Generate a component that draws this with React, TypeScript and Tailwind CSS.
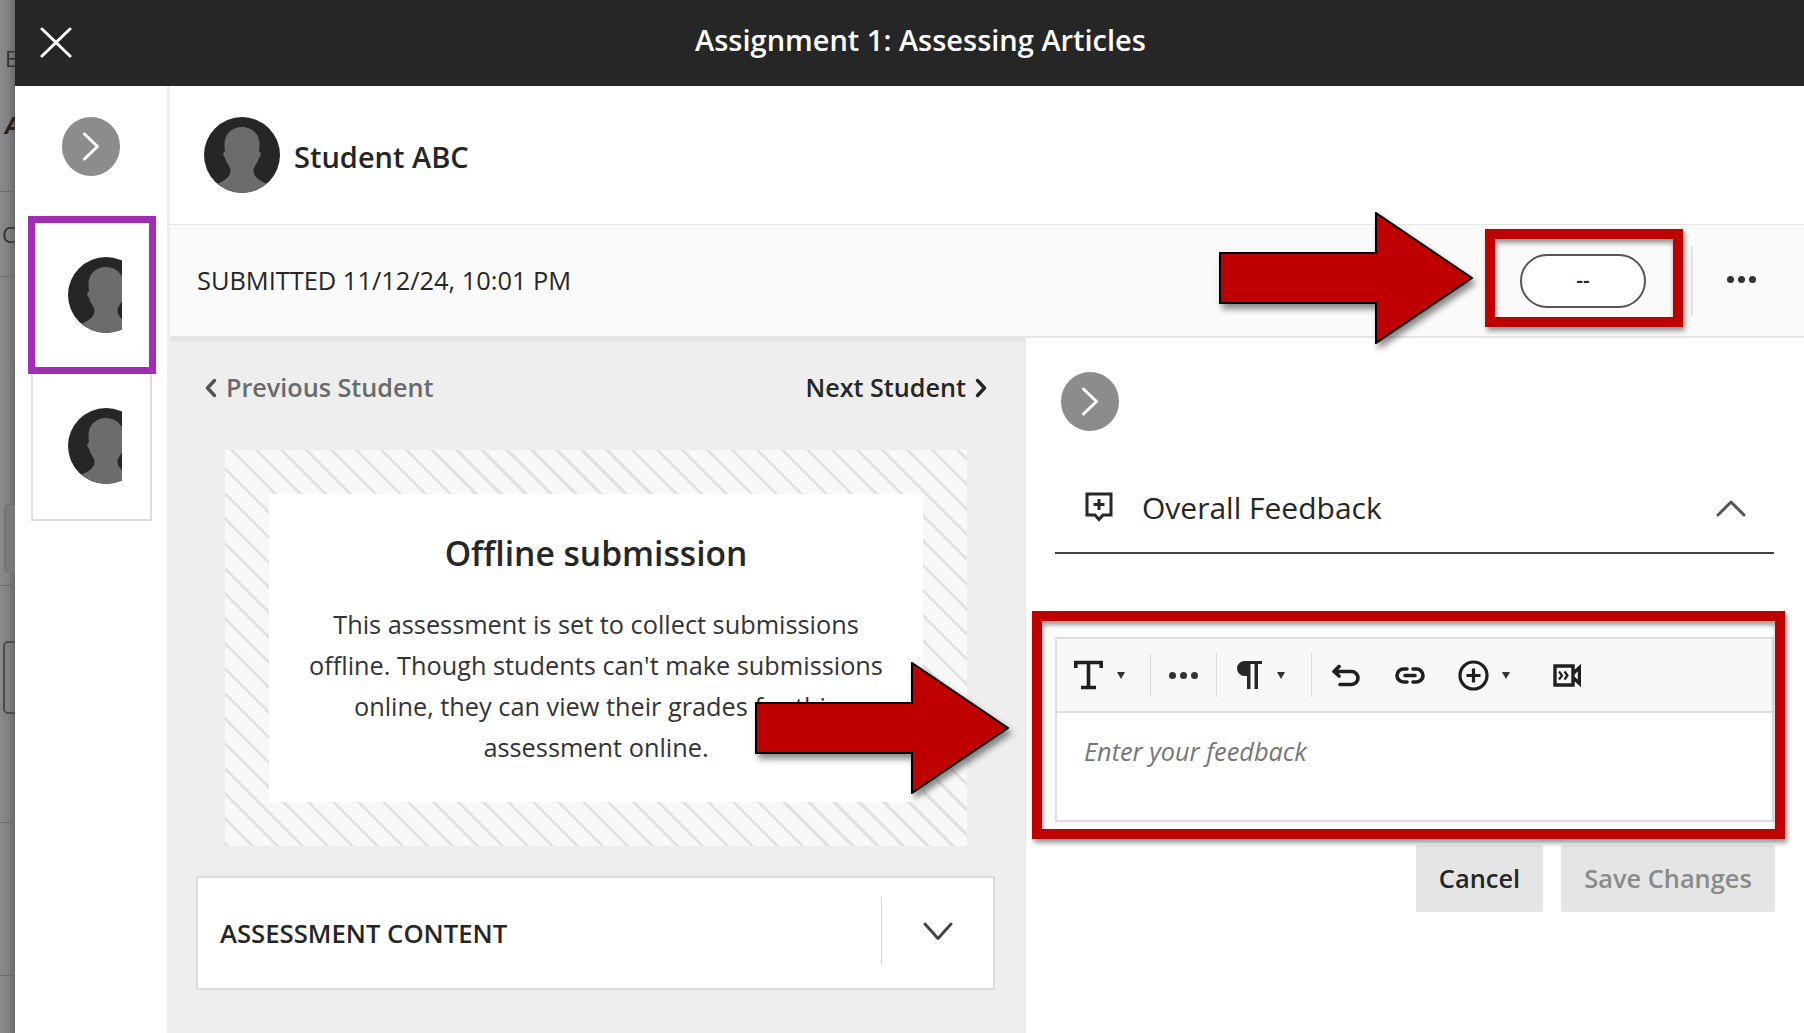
const Avatar = ({ clipped }: { clipped?: boolean }) => (
  <div className={clipped ? "w-[54px] h-[76px] overflow-hidden shrink-0" : "w-[76px] h-[76px] overflow-hidden shrink-0"}>
    <div className="w-[76px] h-[76px] rounded-full overflow-hidden bg-[#262626]">
      <svg viewBox="0 0 76 76" className="w-[76px] h-[76px] block">
        <path
          fill="#6c6c6c"
          d="M38 10 C28 10 20.5 17 20.5 27 C20.5 30 20.7 32 21 34.5 C19 35 18.8 38 20 39.5 C21.5 41 21.5 43 22.5 45 C24 48 26.5 50 26.5 54 C26.5 59 22 63 13 67 L8 76 L68 76 L63 67 C54 63 49.5 59 49.5 54 C49.5 50 52 48 53.5 45 C54.5 43 54.5 41 56 39.5 C57.2 38 57 35 55 34.5 C55.3 32 55.5 30 55.5 27 C55.5 17 48 10 38 10 Z"
        />
      </svg>
    </div>
  </div>
);

const RoundChevron = () => (
  <div className="w-[58px] h-[59px] rounded-full bg-[#8c8c8c] flex items-center justify-center shrink-0">
    <svg width="18" height="29" viewBox="0 0 18 29" fill="none" stroke="#fff" strokeWidth="3" strokeLinecap="round" strokeLinejoin="round">
      <path d="M2.5 2 L15.5 14.5 L2.5 27" />
    </svg>
  </div>
);

const Caret = ({ className }: { className: string }) => (
  <svg width="8" height="7" viewBox="0 0 8 7" className={className}>
    <path d="M0 0 H8 L4 7 Z" fill="#333" />
  </svg>
);

const ToolSep = ({ className }: { className: string }) => <div className={`w-px h-[44px] bg-[#dcdcdc] shrink-0 ${className}`} />;

const Arrow = ({ className }: { className: string }) => (
  <svg
    width="254"
    height="132"
    viewBox="-1 -1 254 132"
    className={`absolute drop-shadow-[3px_5px_3px_rgba(0,0,0,0.45)] ${className}`}
  >
    <path d="M0 40 H156 V0 L252 65 L156 130 V90 H0 Z" fill="#bf0000" stroke="#000" strokeWidth="2" />
  </svg>
);

const App = () => {
  return (
    <div className="relative w-[1804px] h-[1033px] overflow-hidden flex bg-white font-['Open_Sans',sans-serif] text-[#262626]">
      {/* page behind the panel */}
      <div className="w-[15px] h-full shrink-0 overflow-hidden flex flex-col bg-linear-to-r from-[#8a8a8a] via-[#828282] to-[#6a6a6a] text-[#333]">
        <div className="h-[192px] shrink-0 border-b border-[#6c6c6c] pt-[46px] pl-[5px]">
          <div className="text-[22px] leading-[24px]">E</div>
          <div className="text-[24px] leading-[24px] mt-[43px] font-bold italic text-[#222]">A</div>
        </div>
        <div className="h-[85px] shrink-0 border-b border-[#6c6c6c] flex items-center pl-[2px] text-[22px]">C</div>
        <div className="h-[309px] shrink-0 border-b border-[#6c6c6c] pt-[227px] pl-[4px]">
          <div className="w-[24px] h-[69px] rounded-[5px] bg-[#797979] border border-[#707070]" />
        </div>
        <div className="h-[237px] shrink-0 border-b border-[#6c6c6c] pt-[55px] pl-[3px]">
          <div className="w-[24px] h-[73px] rounded-[5px] border-2 border-[#4c4c4c]" />
        </div>
        <div className="h-[153px] shrink-0 border-b border-[#6c6c6c]" />
      </div>

      <div className="flex-1 h-full flex flex-col min-w-0">
        <header className="h-[86px] shrink-0 bg-[#262626] relative flex items-center justify-center pb-[6px]">
          <svg width="32" height="31" viewBox="0 0 32 31" className="absolute left-[25px] top-[27px]" fill="none" stroke="#fff" strokeWidth="3" strokeLinecap="round">
            <path d="M2 2 L30 29 M30 2 L2 29" />
          </svg>
          <h1 className="text-white text-[29px] font-semibold ml-[22px]">Assignment 1: Assessing Articles</h1>
        </header>

        <div className="flex-1 flex min-h-0">
          {/* student list */}
          <aside className="w-[155px] shrink-0 border-r-[3px] border-[#eeeeee] flex flex-col items-center pt-[31px]">
            <RoundChevron />
            <div className="mt-[40px] ml-[2px] w-[128px] h-[158px] border-[7px] border-[#a12db5] flex items-center justify-center pl-[6px]">
              <Avatar clipped />
            </div>
            <div className="ml-[1px] w-[121px] h-[147px] border-2 border-t-0 border-[#dddddd] flex items-center justify-center pl-[6px] pb-[2px]">
              <Avatar clipped />
            </div>
          </aside>

          <div className="flex-1 flex flex-col min-w-0">
            <div className="h-[138px] shrink-0 flex items-center pl-[34px]">
              <Avatar />
              <span className="ml-[14px] text-[29px] font-semibold mt-[4px]">Student ABC</span>
            </div>

            <div className="h-[114px] shrink-0 bg-[#fafafa] border-t border-[#e8e8e8] border-b-2 border-b-[#e6e6e6] flex items-center pl-[27px]">
              <span className="text-[25.4px]">SUBMITTED 11/12/24, 10:01 PM</span>
              <div className="ml-auto w-[126px] h-[54px] rounded-full border-2 border-[#555] bg-white flex items-center justify-center text-[21px] font-semibold">
                --
              </div>
              <div className="w-[2px] h-[70px] bg-[#e2e2e2] ml-[45px]" />
              <div className="ml-[34px] mr-[48px] flex gap-[4px] mb-[2px]">
                <div className="w-[7px] h-[7px] rounded-full bg-[#333]" />
                <div className="w-[7px] h-[7px] rounded-full bg-[#333]" />
                <div className="w-[7px] h-[7px] rounded-full bg-[#333]" />
              </div>
            </div>

            <div className="flex-1 flex min-h-0">
              {/* submission */}
              <main className="w-[855px] shrink-0 bg-[#eeeeee] border-t-[3px] border-[#e3e3e3]">
                <div className="h-[94px] flex items-center justify-between pl-[35px] pr-[38px] mb-[15px] text-[25.2px] font-semibold">
                  <span className="flex items-center gap-[9px] text-[#6a6a6a]">
                    <svg width="12" height="20" viewBox="0 0 12 20" fill="none" stroke="#555" strokeWidth="3.5" strokeLinecap="round" strokeLinejoin="round">
                      <path d="M9.5 2.5 L2.5 10 L9.5 17.5" />
                    </svg>
                    Previous Student
                  </span>
                  <span className="flex items-center gap-[9px]">
                    Next Student
                    <svg width="12" height="20" viewBox="0 0 12 20" fill="none" stroke="#262626" strokeWidth="3.5" strokeLinecap="round" strokeLinejoin="round">
                      <path d="M2.5 2.5 L9.5 10 L2.5 17.5" />
                    </svg>
                  </span>
                </div>

                <div className="ml-[55px] w-[742px] h-[396px] p-[44px] bg-[repeating-linear-gradient(45deg,#e2e2e2_0,#e2e2e2_3px,#f8f8f8_3px,#f8f8f8_17.7px)]">
                  <div className="h-full bg-white flex flex-col items-center pt-[37px] text-center">
                    <h2 className="text-[33.6px] leading-[44px] font-semibold">Offline submission</h2>
                    <p className="mt-[29px] w-[600px] text-[25.3px] leading-[41px] text-[#333]">
                      This assessment is set to collect submissions offline. Though students can't make submissions online, they can view their grades for this assessment online.
                    </p>
                  </div>
                </div>

                <div className="mt-[30px] ml-[26px] w-[799px] h-[114px] bg-white border-2 border-[#dcdcdc] flex items-center pl-[22px]">
                  <span className="text-[25.7px] font-semibold mt-[2px]">ASSESSMENT CONTENT</span>
                  <div className="ml-auto w-px h-[68px] bg-[#d5d5d5] mb-[4px]" />
                  <svg width="30" height="19" viewBox="0 0 30 19" fill="none" stroke="#444" strokeWidth="3" strokeLinecap="round" strokeLinejoin="round" className="ml-[41px] mr-[40px] mb-[4px]">
                    <path d="M2 2 L15 16.5 L28 2" />
                  </svg>
                </div>
              </main>

              {/* feedback */}
              <section className="flex-1 min-w-0 bg-white border-l border-[#e5e5e5] pt-[34px]">
                <div className="ml-[35px]">
                  <RoundChevron />
                </div>
                <div className="ml-[29px] mr-[30px] mt-[46px] h-[77px] pb-[15px] border-b-2 border-[#444] flex items-center pl-[30px] pr-[28px]">
                  <svg width="28" height="30" viewBox="0 0 28 30" fill="none" stroke="#262626" strokeWidth="3">
                    <path d="M2 2 H26 V23 H18 L14 27.5 L10 23 H2 Z" />
                    <path d="M14 7 V18 M8.5 12.5 H19.5" />
                  </svg>
                  <span className="ml-[29px] text-[30px]">Overall Feedback</span>
                  <svg width="30" height="17" viewBox="0 0 30 17" fill="none" stroke="#555" strokeWidth="3" strokeLinecap="round" strokeLinejoin="round" className="ml-auto mt-[2px]">
                    <path d="M2 15 L15 2 L28 15" />
                  </svg>
                </div>

                <div className="ml-[29px] mr-[30px] mt-[83px] h-[185px] border-2 border-[#dedede] flex flex-col">
                  <div className="h-[74px] shrink-0 bg-[#f8f8f8] border-b-2 border-[#dedede] flex items-center pl-[17px] text-[#262626]">
                    <svg width="29" height="30" viewBox="0 0 29 30" fill="none" stroke="#1f1f1f" strokeWidth="3.6" className="shrink-0">
                      <path d="M1.8 8 V2.5 H27.2 V8 M14.5 2.5 V27.5 M7 27.5 H22" />
                    </svg>
                    <Caret className="ml-[14px] shrink-0" />
                    <ToolSep className="ml-[25px]" />
                    <div className="ml-[18px] flex gap-[4px] shrink-0">
                      <div className="w-[7px] h-[7px] rounded-full bg-[#333]" />
                      <div className="w-[7px] h-[7px] rounded-full bg-[#333]" />
                      <div className="w-[7px] h-[7px] rounded-full bg-[#333]" />
                    </div>
                    <ToolSep className="ml-[18px]" />
                    <svg width="26" height="30" viewBox="0 0 26 30" className="ml-[19px] shrink-0">
                      <path d="M26 1 H8.5 A7.5 7.5 0 0 0 8.5 16 H11 V29 H14.5 V4 H18.5 V29 H22 V4 H26 Z" fill="#262626" />
                    </svg>
                    <Caret className="ml-[15px] shrink-0" />
                    <ToolSep className="ml-[26px]" />
                    <svg width="30" height="23" viewBox="0 0 30 23" fill="none" stroke="#1f1f1f" strokeWidth="3.6" strokeLinecap="round" strokeLinejoin="round" className="ml-[19px] shrink-0">
                      <path d="M8 2.5 L3 7.5 L8 12 M3 7.5 H20.5 A6.5 6.5 0 0 1 20.5 20.5 H9" />
                    </svg>
                    <svg width="30" height="17" viewBox="0 0 30 17" fill="none" stroke="#1f1f1f" strokeWidth="3.6" strokeLinecap="round" className="ml-[34px] shrink-0">
                      <path d="M12 2 H8.5 A6.5 6.5 0 0 0 8.5 15 H12 M18 2 H21.5 A6.5 6.5 0 0 1 21.5 15 H18 M10 8.5 H20" />
                    </svg>
                    <svg width="31" height="31" viewBox="0 0 31 31" fill="none" stroke="#1f1f1f" strokeWidth="3.2" className="ml-[33px] shrink-0">
                      <circle cx="15.5" cy="15.5" r="13.5" />
                      <path d="M15.5 8.5 V22.5 M8.5 15.5 H22.5" />
                    </svg>
                    <Caret className="ml-[13px] shrink-0" />
                    <svg width="28" height="23" viewBox="0 0 28 23" fill="none" stroke="#1f1f1f" strokeWidth="3.4" className="ml-[43px] shrink-0">
                      <path d="M2 2 H20 V21 H2 Z M20 9.5 L26.5 3.5 V19.5 L20 13.5" />
                      <path d="M6 7.5 L9 11.5 L6 15.5 M11.5 7.5 L14.5 11.5 L11.5 15.5" strokeWidth="2.2" />
                    </svg>
                  </div>
                  <div className="flex-1 bg-white pl-[27px] pt-[21px] text-[25.3px] leading-[34px] italic text-[#767676]">Enter your feedback</div>
                </div>

                <div className="mt-[23px] mr-[29px] flex justify-end gap-[18px] text-[25.4px] font-semibold">
                  <div className="w-[127px] h-[67px] rounded-[2px] bg-[#e5e5e5] flex items-center justify-center">Cancel</div>
                  <div className="w-[214px] h-[67px] rounded-[2px] bg-[#e5e5e5] text-[#8a8a8a] flex items-center justify-center">Save Changes</div>
                </div>
              </section>
            </div>
          </div>
        </div>
      </div>

      {/* callouts drawn over the screen */}
      <Arrow className="left-[1219px] top-[212px]" />
      <Arrow className="left-[755px] top-[662px]" />
      <div className="absolute left-[1485px] top-[229px] w-[198px] h-[98px] border-[10px] border-[#bf0000] shadow-[2px_4px_5px_rgba(0,0,0,0.4),inset_1px_4px_5px_rgba(0,0,0,0.4)]" />
      <div className="absolute left-[1032px] top-[611px] w-[753px] h-[228px] border-[10px] border-[#bf0000] shadow-[2px_4px_5px_rgba(0,0,0,0.4),inset_1px_4px_5px_rgba(0,0,0,0.4)]" />
    </div>
  );
};

export default App;
